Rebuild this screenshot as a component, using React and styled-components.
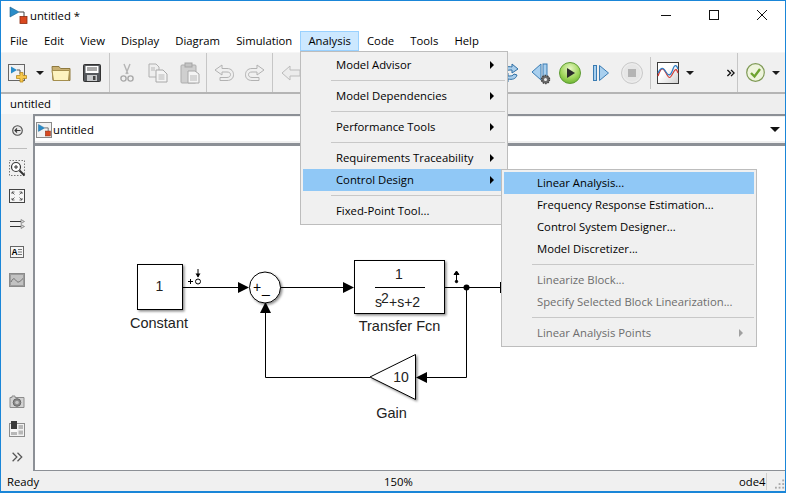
import React from 'react';
import styled, { createGlobalStyle } from 'styled-components';

const GlobalStyle = createGlobalStyle`
  html, body {
    margin: 0;
    padding: 0;
    background: #ffffff;
    overflow: hidden;
  }
  body {
    font-family: "Open Sans", "Noto Sans", sans-serif;
    font-size: 11.3px;
    color: #000000;
  }
`;

const Window = styled.div`
  position: relative;
  width: 786px;
  height: 493px;
  box-sizing: border-box;
  border: 1px solid #1a86d8;
  border-bottom-width: 2px;
  display: flex;
  flex-direction: column;
  background: #f0f0f0;
  overflow: hidden;
`;

const TitleBar = styled.div`
  height: 28px;
  flex: none;
  background: #ffffff;
  display: flex;
  align-items: center;
  padding-left: 7px;
  gap: 2px;
`;

const TitleText = styled.span`
  flex: 1;
  line-height: 16px;
  margin-top: 1px;
`;

const WindowButton = styled.span`
  width: 46px;
  height: 28px;
  flex: none;
  display: flex;
  align-items: center;
  justify-content: center;
`;

const MenuBar = styled.div`
  height: 23px;
  flex: none;
  background: #ffffff;
  display: flex;
  align-items: center;
  padding-left: 1px;
`;

const MenuTitle = styled.span`
  padding: 0 7.05px;
  height: 20px;
  line-height: 18px;
  box-sizing: border-box;
  border: 1px solid ${(p) => (p.$open ? '#99d1ff' : 'transparent')};
  background: ${(p) => (p.$open ? '#cce8ff' : 'transparent')};
  margin-top: 1px;
`;

const Toolbar = styled.div`
  height: 39px;
  flex: none;
  display: flex;
  align-items: center;
  padding: 0 5px 0 7px;
  background: #f0f0f0;
  border-bottom: 2px solid #b4b4b4;
  border-top: 1px solid #f6f6f6;
`;

const ToolGroup = styled.div`
  display: flex;
  align-items: center;
  height: 100%;
  margin-left: ${(p) => (p.$push ? 'auto' : '0')};
`;

const Tool = styled.span`
  width: ${(p) => p.$w}px;
  margin-left: ${(p) => p.$ml || 0}px;
  display: flex;
  justify-content: center;
  align-items: center;
  flex: none;
`;

const ToolSep = styled.span`
  width: 1px;
  height: ${(p) => (p.$short ? '32px' : '100%')};
  margin-left: ${(p) => p.$ml || 0}px;
  background: #c6c6c6;
  flex: none;
`;

const Caret = styled.span`
  width: 0;
  height: 0;
  border-left: 4px solid transparent;
  border-right: 4px solid transparent;
  border-top: 4px solid #1c1c1c;
`;

const TabStrip = styled.div`
  height: 20px;
  flex: none;
  display: flex;
  background: #eeeeee;
`;

const Tab = styled.div`
  width: 59px;
  height: 21px;
  background: #f8f8f8;
  text-align: center;
  line-height: 20px;
`;

const Main = styled.div`
  flex: 1;
  display: flex;
  min-height: 0;
`;

const Palette = styled.div`
  width: 32px;
  flex: none;
  display: flex;
  flex-direction: column;
  align-items: center;
  background: #f0f0f0;
  padding-top: 10px;
  box-sizing: border-box;
`;

const PaletteSep = styled.span`
  width: 19px;
  height: 1px;
  background: #bdbdbd;
  margin: 12px 0 5px;
`;

const PaletteItem = styled.span`
  height: ${(p) => p.$h || 28}px;
  display: flex;
  align-items: center;
  justify-content: center;
`;

const PaletteFill = styled.span`
  flex: 1;
`;

const Content = styled.div`
  flex: 1;
  display: flex;
  flex-direction: column;
  min-width: 0;
  border-left: 2px solid #8c9096;
  border-bottom: 1px solid #8c9096;
`;

const AddressBar = styled.div`
  height: 27px;
  flex: none;
  background: #ffffff;
  border-top: 2px solid #8c9096;
  border-bottom: 3px solid #8c9096;
  box-shadow: inset 0 1px 0 #f0f0f0, inset 0 -2px 0 #f0f0f0;
  display: flex;
  align-items: center;
  padding: 0 5px 0 1px;
`;

const Crumb = styled.span`
  width: 16px;
  height: 16px;
  box-sizing: border-box;
  border: 1px solid #8a8a8a;
  background: #f2f2f2;
  display: flex;
  flex: none;
  margin-right: 1px;
`;

const CrumbText = styled.span`
  flex: 1;
`;

const AddressCaret = styled.span`
  width: 0;
  height: 0;
  border-left: 5px solid transparent;
  border-right: 5px solid transparent;
  border-top: 5px solid #111111;
`;

const Canvas = styled.div`
  flex: 1;
  background: #ffffff;
  min-height: 0;
`;

const DiagramSvg = styled.svg`
  display: block;
  width: 749px;
  height: 325px;
`;

const StatusBar = styled.div`
  height: 20px;
  flex: none;
  display: flex;
  align-items: center;
  background: #f0f0f0;
  padding-left: 6px;
`;

const StatusReady = styled.span`
  width: 377px;
  flex: none;
`;

const StatusZoom = styled.span`
  width: 355px;
  flex: none;
`;

const StatusSolver = styled.span`
  width: 27px;
  flex: none;
  height: 17px;
  line-height: 17px;
  border-right: 1px solid #d0d0d0;
`;

const Grip = styled.svg`
  margin-left: 8px;
  margin-top: 6px;
`;

const Menu = styled.div`
  position: absolute;
  left: ${(p) => p.$left}px;
  top: ${(p) => p.$top}px;
  width: ${(p) => p.$width}px;
  box-sizing: border-box;
  background: #f0f0f0;
  border: 1px solid #bdbdbd;
  padding: 2px;
`;

const MenuItem = styled.div`
  height: 22px;
  line-height: 22px;
  padding-left: 33px;
  position: relative;
  background: ${(p) => (p.$active ? '#90c8f6' : 'transparent')};
  color: ${(p) => (p.$disabled ? '#6d6d6d' : '#000000')};
`;

const SubArrow = styled.span`
  position: absolute;
  right: 11px;
  top: 7px;
  width: 0;
  height: 0;
  border-top: 4px solid transparent;
  border-bottom: 4px solid transparent;
  border-left: 4px solid ${(p) => (p.$disabled ? '#a0a0a0' : '#000000')};
`;

const MenuSep = styled.div`
  height: 1px;
  margin: 4px 0 4px 28px;
  background: #c8c8c8;
`;

const ModelIcon = ({ size = 20 }) => (
  <svg width={size} height={size} viewBox="0 0 20 20">
    <path d="M11 7h5v5" fill="none" stroke="#444" strokeWidth="1" />
    <path d="M2 2l9 5-9 5z" fill="#2a8cc8" stroke="#1b5f8c" strokeWidth="0.6" />
    <rect x="12" y="11.5" width="7" height="7" fill="#d9481f" stroke="#8c2c10" strokeWidth="0.8" />
  </svg>
);

const NewIcon = () => (
  <svg width="20" height="20" viewBox="0 0 20 20">
    <rect x="0.5" y="1.5" width="16" height="16" fill="#f2f2f2" stroke="#666" />
    <path d="M3 3.5l6 3.5-6 3.5z" fill="#2a8cc8" />
    <path d="M9 7h3v4" fill="none" stroke="#555" />
    <path d="M12 9.5h3v3h3.5v3H15v3.5h-3V15.5H8.5v-3H12z" fill="#f7c94f" stroke="#b98a1d" strokeWidth="0.8" />
  </svg>
);

const OpenIcon = () => (
  <svg width="20" height="18" viewBox="0 0 20 18">
    <path d="M1 2.5h7l1.5 2H19v12H2z" fill="#c9b072" stroke="#8f7a3f" />
    <path d="M1 6.5h17.5L17.5 16.5H2.5z" fill="#fdf3bf" stroke="#a58f4e" />
  </svg>
);

const SaveIcon = () => (
  <svg width="18" height="18" viewBox="0 0 18 18">
    <rect x="0.5" y="0.5" width="17" height="17" rx="1" fill="#55585c" stroke="#333" />
    <rect x="2.5" y="2" width="13" height="7" fill="#fff" />
    <path d="M4 4h10M4 6h10" stroke="#555" />
    <rect x="4" y="11" width="10" height="6" fill="#c6c8ca" />
    <rect x="10" y="12" width="2.5" height="4" fill="#444" />
  </svg>
);

const CutIcon = () => (
  <svg width="14" height="20" viewBox="0 0 14 20">
    <path d="M6 11L10 1M8 11L4 1" stroke="#b5b5b5" strokeWidth="1.4" fill="none" />
    <circle cx="3.5" cy="15.5" r="2.6" fill="none" stroke="#a9a9a9" strokeWidth="1.4" />
    <circle cx="10.5" cy="15.5" r="2.6" fill="none" stroke="#a9a9a9" strokeWidth="1.4" />
  </svg>
);

const CopyIcon = () => (
  <svg width="20" height="20" viewBox="0 0 20 20">
    <path d="M1 1h7l3 3v10H1z" fill="#eeeeee" stroke="#b0b0b0" />
    <path d="M8 7h7l4 4v8H8z" fill="#f4f4f4" stroke="#a8a8a8" />
    <path d="M10.5 12h6M10.5 14h6M10.5 16h6M3 5h4M3 7h4" stroke="#b8b8b8" />
  </svg>
);

const PasteIcon = () => (
  <svg width="20" height="22" viewBox="0 0 20 22">
    <rect x="1" y="3" width="15" height="18" rx="1" fill="#cfcfcf" stroke="#adadad" />
    <rect x="5" y="1" width="7" height="4" fill="#c4c4c4" stroke="#a5a5a5" />
    <path d="M8 9h7l4 3v9H8z" fill="#f4f4f4" stroke="#a8a8a8" />
    <path d="M10 14h7M10 16h7M10 18h7" stroke="#b8b8b8" />
  </svg>
);

const UndoIcon = ({ flip }) => (
  <svg width="20" height="18" viewBox="0 0 20 18" style={flip ? { transform: 'scaleX(-1)' } : undefined}>
    <path
      d="M8 1L1 6l7 5V8h5c2.5 0 3.5 1.2 3.5 2.6S15.5 13.5 13 13.5H6v3h7c4.5 0 6.5-2.6 6.5-5.8S17.5 4.5 13 4.5H8z"
      fill="#efefef"
      stroke="#b2b2b2"
    />
  </svg>
);

const BackArrowIcon = () => (
  <svg width="20" height="16" viewBox="0 0 20 16">
    <path d="M9 1L1 8l8 7v-4h10V5H9z" fill="#ececec" stroke="#bcbcbc" />
  </svg>
);

const RefreshIcon = () => (
  <svg width="20" height="20" viewBox="0 0 20 20">
    <path d="M3 8c1-4 5-5 9-4V1l6 5-6 4V7c-3 0-5 0-6 2z" fill="#a9cdea" stroke="#2e6fa5" />
    <path d="M17 12c-1 4-5 5-9 4v3l-6-5 6-4v3c3 0 5 0 6-2z" fill="#a9cdea" stroke="#2e6fa5" />
  </svg>
);

const StepBackIcon = () => (
  <svg width="20" height="24" viewBox="0 0 20 24">
    <path d="M10 3L1 11l9 8z" fill="#a8cfee" stroke="#3a7cb3" />
    <rect x="12" y="3" width="4" height="15" fill="#a8cfee" stroke="#3a7cb3" />
    <circle cx="14.5" cy="18.5" r="4" fill="#6b6b6b" stroke="#444" strokeWidth="1.5" strokeDasharray="1.5 1" />
    <circle cx="14.5" cy="18.5" r="1.5" fill="#f0f0f0" />
  </svg>
);

const PlayIcon = () => (
  <svg width="22" height="22" viewBox="0 0 22 22">
    <defs>
      <radialGradient id="playFill" cx="0.5" cy="0.3" r="0.75">
        <stop offset="0" stopColor="#e8f6c6" />
        <stop offset="0.6" stopColor="#9fd65a" />
        <stop offset="1" stopColor="#63ad2c" />
      </radialGradient>
    </defs>
    <circle cx="11" cy="11" r="10.5" fill="url(#playFill)" stroke="#5f9c35" />
    <path d="M8 6l8 5-8 5z" fill="#2b2b2b" />
  </svg>
);

const StepForwardIcon = () => (
  <svg width="16" height="16" viewBox="0 0 16 16">
    <rect x="0.5" y="0.5" width="3" height="15" fill="#a8cfee" stroke="#3a7cb3" />
    <path d="M6.5 0.5L15.5 8l-9 7.5z" fill="#a8cfee" stroke="#3a7cb3" />
  </svg>
);

const StopIcon = () => (
  <svg width="22" height="22" viewBox="0 0 22 22">
    <circle cx="11" cy="11" r="10.5" fill="#ececec" stroke="#c8c8c8" />
    <circle cx="11" cy="11" r="8.5" fill="#e6e6e6" />
    <rect x="7" y="7" width="8" height="8" fill="#b4b4b4" />
  </svg>
);

const ScopeIcon = () => (
  <svg width="22" height="22" viewBox="0 0 22 22">
    <defs>
      <linearGradient id="scopeFill" x1="0" y1="0" x2="1" y2="1">
        <stop offset="0.4" stopColor="#ffffff" />
        <stop offset="1" stopColor="#cfcfcf" />
      </linearGradient>
    </defs>
    <rect x="0.5" y="0.5" width="21" height="21" fill="url(#scopeFill)" stroke="#3d3d3d" />
    <path d="M1 14c3-9 5-9 8-3s4 6 7 0 4-3 5 0" fill="none" stroke="#d23a35" strokeWidth="1.2" />
    <path d="M1 11c3-6 5-6 8-1s5 3 7-3 4-3 5 0" fill="none" stroke="#2d7cc4" strokeWidth="1.2" />
  </svg>
);

const CheckIcon = () => (
  <svg width="19" height="19" viewBox="0 0 19 19">
    <circle cx="9.5" cy="9.5" r="8.8" fill="#eef4dc" stroke="#7f9a56" strokeWidth="1.2" />
    <path d="M5 10l3.5 3.5L14 6" fill="none" stroke="#6ea32f" strokeWidth="2.4" />
  </svg>
);

const ChevronsIcon = ({ color = '#111', width = 1.5, w = 9, h = 8 }) => (
  <svg width={w} height={h} viewBox="0 0 9 8">
    <path d="M0.5 0.5L4 4 0.5 7.5M4.5 0.5L8 4 4.5 7.5" fill="none" stroke={color} strokeWidth={width} />
  </svg>
);

const HistoryIcon = () => (
  <svg width="11" height="11" viewBox="0 0 11 11">
    <circle cx="5.5" cy="5.5" r="4.8" fill="#e6e6e6" stroke="#4d4d4d" strokeWidth="1.1" />
    <path d="M8.5 5.5H3M5 3.5L3 5.5l2 2" fill="none" stroke="#333" strokeWidth="1.1" />
  </svg>
);

const ZoomIcon = () => (
  <svg width="17" height="17" viewBox="0 0 17 17">
    <rect x="0.5" y="0.5" width="15" height="15" fill="none" stroke="#777" strokeDasharray="1.5 1.5" />
    <circle cx="7" cy="7" r="4.5" fill="#fff" stroke="#333" strokeWidth="1.2" />
    <path d="M5 7h4M7 5v4" stroke="#333" />
    <path d="M10.5 10.5L15.5 15.5" stroke="#333" strokeWidth="2" />
  </svg>
);

const FitIcon = () => (
  <svg width="16" height="14" viewBox="0 0 16 14">
    <rect x="0.5" y="0.5" width="15" height="13" fill="#f6f6f6" stroke="#444" />
    <path d="M3 5V3h2.5M13 5V3h-2.5M3 9v2h2.5M13 9v2h-2.5M3 3l2.5 2.5M13 3l-2.5 2.5M3 11l2.5-2.5M13 11l-2.5-2.5" fill="none" stroke="#444" strokeWidth="0.8" />
  </svg>
);

const RouteIcon = () => (
  <svg width="15" height="10" viewBox="0 0 15 10">
    <path d="M0 2.5h14M0 7.5h14" stroke="#333" />
    <path d="M11 0.5l3.5 2-3.5 2zM11 5.5l3.5 2-3.5 2z" fill="#d8d8d8" stroke="#777" strokeWidth="0.7" />
  </svg>
);

const TextIcon = () => (
  <svg width="14" height="12" viewBox="0 0 14 12">
    <rect x="0.5" y="0.5" width="13" height="11" fill="#f6f6f6" stroke="#666" />
    <text x="1.5" y="9" fontFamily="Liberation Sans" fontWeight="bold" fontSize="8.5">A</text>
    <path d="M8 3.5h4M8 6h4M8 8.5h4" stroke="#555" strokeWidth="0.8" />
  </svg>
);

const ImageIcon = () => (
  <svg width="16" height="14" viewBox="0 0 16 14">
    <rect x="0.5" y="0.5" width="15" height="13" fill="#9c9c9c" stroke="#8a8a8a" />
    <rect x="2" y="2" width="12" height="10" fill="#c2c2c2" />
    <path d="M2 9c2-4 3-4 5-1.5s3 2 7-2" fill="none" stroke="#6e6e6e" />
  </svg>
);

const CameraIcon = () => (
  <svg width="16" height="13" viewBox="0 0 16 13">
    <path d="M1 2.5h2V1h3v1.5h9v10H1z" fill="#d2d2d2" stroke="#8c8c8c" />
    <circle cx="8" cy="7.5" r="3.8" fill="#8b8b8b" stroke="#666" />
    <circle cx="8" cy="7.5" r="1.8" fill="#c6c6c6" />
  </svg>
);

const LayoutIcon = () => (
  <svg width="16" height="16" viewBox="0 0 16 16">
    <rect x="0.5" y="2.5" width="15" height="13" fill="#f2f2f2" stroke="#8c8c8c" />
    <rect x="2" y="0" width="6" height="8" fill="#3b3b3b" />
    <rect x="2" y="8" width="6" height="3" fill="#f8f8f8" />
    <rect x="9.5" y="4" width="4.5" height="4" fill="#b8b8b8" />
    <rect x="9.5" y="9.5" width="4.5" height="4" fill="#b8b8b8" />
    <rect x="2" y="11" width="6" height="3" fill="#b8b8b8" />
  </svg>
);

const CloseGlyph = () => (
  <svg width="10" height="10" viewBox="0 0 10 10">
    <path d="M0 0L10 10M10 0L0 10" stroke="#111" />
  </svg>
);

const MaximizeGlyph = () => (
  <svg width="10" height="10" viewBox="0 0 10 10">
    <rect x="0.5" y="0.5" width="9" height="9" fill="none" stroke="#111" />
  </svg>
);

const MinimizeGlyph = () => (
  <svg width="10" height="10" viewBox="0 0 10 10">
    <path d="M0 5.5h10" stroke="#111" />
  </svg>
);

// diagram uses page coordinates, so the viewBox starts where the canvas starts
const Diagram = () => (
  <DiagramSvg viewBox="35 146 749 325" fontFamily="'Liberation Sans', Arial, sans-serif" fill="#222">
    <defs>
      <filter id="blockShadow" x="-10%" y="-10%" width="125%" height="125%">
        <feDropShadow dx="1.5" dy="1.5" stdDeviation="0.8" floodColor="#000" floodOpacity="0.45" />
      </filter>
    </defs>

    <g stroke="#000" strokeWidth="1" fill="none">
      <path d="M182.5 287.5H240" />
      <path d="M280 287.5H345" />
      <path d="M445 287.5H500.5M500.5 282V293" />
      <path d="M466.5 287.5V377.5H426" />
      <path d="M370 377.5H265.5V311" />
    </g>

    <g fill="#000">
      <path d="M238 282l11 5.5-11 5.5z" />
      <path d="M343 282l11 5.5-11 5.5z" />
      <path d="M427 372l-11 5.5 11 5.5z" />
      <path d="M260 313l5.5-11 5.5 11z" />
      <circle cx="466.5" cy="287.5" r="3" />
    </g>

    <rect x="137.5" y="264.5" width="45" height="45" fill="#fff" stroke="#000" filter="url(#blockShadow)" />
    <text x="159.5" y="291" fontSize="14" textAnchor="middle">1</text>
    <text x="159" y="328" fontSize="14.5" textAnchor="middle">Constant</text>

    <g fill="none" stroke="#000">
      <path d="M188 281.5h5M190.5 279v5" />
      <circle cx="198" cy="281.5" r="2.5" />
      <path d="M198 269v8" />
    </g>
    <path d="M195.5 273.5h5l-2.5 4z" fill="#000" />

    <circle cx="265" cy="287.5" r="15.5" fill="#fff" stroke="#000" filter="url(#blockShadow)" />
    <text x="257" y="292" fontSize="14" textAnchor="middle" fill="#000">+</text>
    <text x="262" y="293" fontSize="14" fill="#000">_</text>

    <rect x="354.5" y="260.5" width="90" height="53" fill="#fff" stroke="#000" filter="url(#blockShadow)" />
    <text x="399" y="279" fontSize="14" textAnchor="middle">1</text>
    <path d="M375 287.5H425" stroke="#000" />
    <text x="375" y="307" fontSize="14">s</text>
    <text x="381" y="303" fontSize="14">2</text>
    <text x="389" y="307" fontSize="14">+s+2</text>
    <text x="399.5" y="331" fontSize="14.5" textAnchor="middle">Transfer Fcn</text>

    <g stroke="#000" fill="#000">
      <path d="M456.5 272V281" fill="none" />
      <path d="M454 274.5l2.5-3.5 2.5 3.5z" />
      <circle cx="456.5" cy="281.5" r="1.2" />
    </g>

    <path d="M415.5 354.5V399.5L370 377z" fill="#fff" stroke="#000" filter="url(#blockShadow)" />
    <text x="401" y="382" fontSize="14" textAnchor="middle">10</text>
    <text x="391.5" y="418" fontSize="14.5" textAnchor="middle">Gain</text>
  </DiagramSvg>
);

const menuNames = ['File', 'Edit', 'View', 'Display', 'Diagram', 'Simulation', 'Analysis', 'Code', 'Tools', 'Help'];

const analysisItems = [
  { label: 'Model Advisor', more: true },
  { sep: true },
  { label: 'Model Dependencies', more: true },
  { sep: true },
  { label: 'Performance Tools', more: true },
  { sep: true },
  { label: 'Requirements Traceability', more: true },
  { label: 'Control Design', more: true, active: true },
  { sep: true },
  { label: 'Fixed-Point Tool...' },
];

const controlItems = [
  { label: 'Linear Analysis...', active: true },
  { label: 'Frequency Response Estimation...' },
  { label: 'Control System Designer...' },
  { label: 'Model Discretizer...' },
  { sep: true },
  { label: 'Linearize Block...', disabled: true },
  { label: 'Specify Selected Block Linearization...', disabled: true },
  { sep: true },
  { label: 'Linear Analysis Points', disabled: true, more: true },
];

const MenuList = ({ items }) =>
  items.map((item, i) =>
    item.sep ? (
      <MenuSep key={i} />
    ) : (
      <MenuItem key={i} $active={item.active} $disabled={item.disabled}>
        {item.label}
        {item.more && <SubArrow $disabled={item.disabled} />}
      </MenuItem>
    )
  );

const App = () => (
  <Window>
    <GlobalStyle />
    <TitleBar>
      <ModelIcon />
      <TitleText>untitled *</TitleText>
      <WindowButton><MinimizeGlyph /></WindowButton>
      <WindowButton><MaximizeGlyph /></WindowButton>
      <WindowButton><CloseGlyph /></WindowButton>
    </TitleBar>

    <MenuBar>
      {menuNames.map((name) => (
        <MenuTitle key={name} $open={name === 'Analysis'}>{name}</MenuTitle>
      ))}
    </MenuBar>

    <Toolbar>
      <ToolGroup>
        <Tool $w={20}><NewIcon /></Tool>
        <Tool $w={8} $ml={8}><Caret /></Tool>
        <Tool $w={20} $ml={7}><OpenIcon /></Tool>
        <Tool $w={18} $ml={12}><SaveIcon /></Tool>
        <ToolSep $ml={8} />
        <Tool $w={14} $ml={10}><CutIcon /></Tool>
        <Tool $w={20} $ml={14}><CopyIcon /></Tool>
        <Tool $w={20} $ml={12}><PasteIcon /></Tool>
        <ToolSep $ml={6} />
        <Tool $w={20} $ml={7}><UndoIcon /></Tool>
        <Tool $w={20} $ml={11}><UndoIcon flip /></Tool>
        <ToolSep $ml={7} />
        <Tool $w={20} $ml={8}><BackArrowIcon /></Tool>
      </ToolGroup>
      <ToolGroup $push>
        <Tool $w={20}><RefreshIcon /></Tool>
        <Tool $w={20} $ml={11}><StepBackIcon /></Tool>
        <Tool $w={22} $ml={8}><PlayIcon /></Tool>
        <Tool $w={16} $ml={12}><StepForwardIcon /></Tool>
        <Tool $w={22} $ml={12}><StopIcon /></Tool>
        <ToolSep $ml={7} $short />
        <Tool $w={22} $ml={6}><ScopeIcon /></Tool>
        <Tool $w={8} $ml={7}><Caret /></Tool>
        <Tool $w={8} $ml={33}><ChevronsIcon /></Tool>
        <ToolSep $ml={2} />
        <Tool $w={19} $ml={8}><CheckIcon /></Tool>
        <Tool $w={8} $ml={7}><Caret /></Tool>
      </ToolGroup>
    </Toolbar>

    <TabStrip>
      <Tab>untitled</Tab>
    </TabStrip>

    <Main>
      <Palette>
        <PaletteItem $h={12}><HistoryIcon /></PaletteItem>
        <PaletteSep />
        <PaletteItem><ZoomIcon /></PaletteItem>
        <PaletteItem><FitIcon /></PaletteItem>
        <PaletteItem><RouteIcon /></PaletteItem>
        <PaletteItem><TextIcon /></PaletteItem>
        <PaletteItem><ImageIcon /></PaletteItem>
        <PaletteFill />
        <PaletteItem><CameraIcon /></PaletteItem>
        <PaletteItem><LayoutIcon /></PaletteItem>
        <PaletteItem><ChevronsIcon color="#555" width={1} w={11} h={10} /></PaletteItem>
      </Palette>
      <Content>
        <AddressBar>
          <Crumb><ModelIcon size={14} /></Crumb>
          <CrumbText>untitled</CrumbText>
          <AddressCaret />
        </AddressBar>
        <Canvas>
          <Diagram />
        </Canvas>
      </Content>
    </Main>

    <StatusBar>
      <StatusReady>Ready</StatusReady>
      <StatusZoom>150%</StatusZoom>
      <StatusSolver>ode4</StatusSolver>
      <Grip width="11" height="11" viewBox="0 0 11 11" fill="#a8a8a8">
        <rect x="8" y="0" width="2" height="2" />
        <rect x="4" y="4" width="2" height="2" />
        <rect x="8" y="4" width="2" height="2" />
        <rect x="0" y="8" width="2" height="2" />
        <rect x="4" y="8" width="2" height="2" />
        <rect x="8" y="8" width="2" height="2" />
      </Grip>
    </StatusBar>

    <Menu $left={299} $top={50} $width={208}>
      <MenuList items={analysisItems} />
    </Menu>
    <Menu $left={500} $top={168} $width={256}>
      <MenuList items={controlItems} />
    </Menu>
  </Window>
);

export default App;
